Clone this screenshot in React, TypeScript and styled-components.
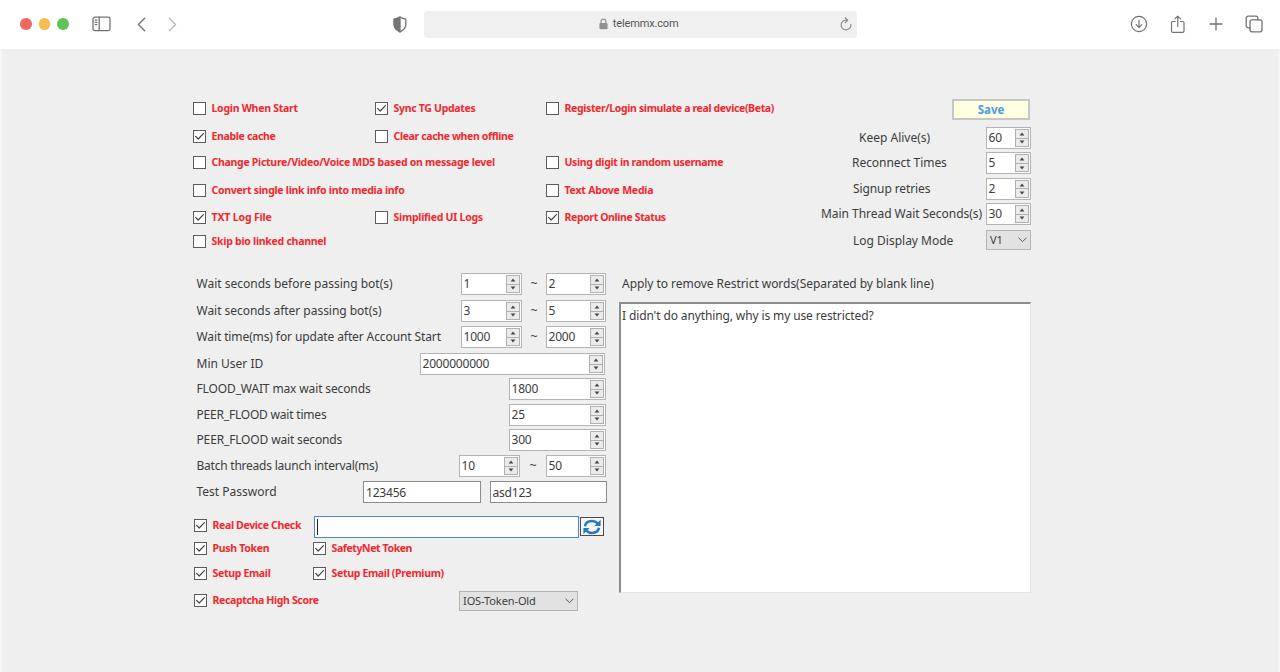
import React from "react";
import styled, { createGlobalStyle } from "styled-components";

const GlobalStyle = createGlobalStyle`
  *, *::before, *::after { box-sizing: border-box; }
  body { margin: 0; background: #efefef; overflow: hidden; }
`;

const ui = `"Noto Sans", "Open Sans", sans-serif`;

const Window = styled.div`
  width: 1280px;
  height: 672px;
  background: #efefef;
  border-left: 2px solid #f8f8f8;
  border-right: 2px solid #f6f6f6;
  font-family: ${ui};
  color: #3c3c3c;
`;

/* ---------- browser toolbar ---------- */

const Toolbar = styled.header`
  display: flex;
  align-items: center;
  height: 49px;
  margin: 0 -2px;
  padding-bottom: 1px;
  background: #fff;
`;

const Lights = styled.div`
  display: flex;
  gap: 7px;
  margin-left: 20px;
`;

const Light = styled.span<{ $color: string }>`
  width: 11.6px;
  height: 11.6px;
  border-radius: 50%;
  background: ${(p) => p.$color};
`;

const Glyph = styled.svg<{ $ml?: number; $color?: string; $w?: number }>`
  display: block;
  flex: none;
  margin-left: ${(p) => p.$ml ?? 0}px;
  fill: none;
  stroke: ${(p) => p.$color ?? "#747474"};
  stroke-width: ${(p) => p.$w ?? 1.3};
  stroke-linecap: round;
  stroke-linejoin: round;
`;

const Address = styled.div`
  display: flex;
  align-items: center;
  width: 433px;
  height: 27px;
  margin-left: 17px;
  padding: 0 5px 0 175px;
  border-radius: 4px;
  background: #f0f0f0;
`;

const Host = styled.span`
  flex: 1;
  margin-left: 5px;
  font: 11px/14px Roboto, sans-serif;
  letter-spacing: -0.14px;
  color: #555;
`;

/* ---------- shared form parts ---------- */

const Label = styled.span<{ $indent?: number; $track?: number }>`
  display: block;
  margin-left: ${(p) => p.$indent ?? 0}px;
  font-size: 12px;
  line-height: 21px;
  white-space: nowrap;
  letter-spacing: ${(p) => p.$track ?? 0}px;
`;

const CheckLabel = styled.label<{ $col?: number }>`
  display: flex;
  align-items: center;
  gap: 5.5px;
  height: 13px;
  grid-column: ${(p) => p.$col ?? "auto"};
`;

const Box = styled.span`
  display: flex;
  flex: none;
  width: 13px;
  height: 13px;
  border: 1px solid #5c5c5c;
  background: #fff;
`;

const CheckText = styled.span<{ $track?: number }>`
  font-size: 10.5px;
  font-weight: 700;
  line-height: 13px;
  white-space: nowrap;
  letter-spacing: ${(p) => p.$track ?? -0.3}px;
  color: #f2282e;
`;

const SpinFrame = styled.div<{ $w: number }>`
  display: flex;
  justify-content: space-between;
  width: ${(p) => p.$w}px;
  height: 22px;
  padding: 1px;
  border: 1px solid #b4b4b4;
  background: #fff;
`;

const Value = styled.span`
  padding-left: 0.5px;
  font-size: 12px;
  line-height: 17px;
  letter-spacing: -0.2px;
`;

const Arrows = styled.span`
  display: flex;
  flex-direction: column;
  width: 14px;
  height: 18px;
`;

const Arrow = styled.span`
  display: flex;
  flex: 1;
  align-items: center;
  justify-content: center;
  border: 1px solid #b0b0b0;
  background: #ebebeb;
  & + & { border-top-width: 0; }
`;

const Combo = styled.div<{ $w: number }>`
  display: flex;
  align-items: center;
  justify-content: space-between;
  width: ${(p) => p.$w}px;
  height: 20px;
  padding: 0 3px;
  border: 1px solid #b4b4b4;
  background: #e2e2e2;
  font-size: 11px;
  line-height: 18px;
  letter-spacing: -0.1px;
`;

const Save = styled.button`
  width: 78px;
  height: 21px;
  margin: 0 0 7px 131px;
  padding: 0;
  border: 2px solid #c6c6c4;
  background: #ffffe1;
  font: 700 11.5px/16px ${ui};
  color: #4a9ae6;
`;

/* ---------- page sections ---------- */

const Page = styled.main`
  display: flex;
  flex-direction: column;
  padding: 50px 0 0 191px;
`;

const Top = styled.section`
  display: flex;
  height: 174px;
`;

const Options = styled.div`
  display: grid;
  width: 628px;
  padding-top: 3px;
  grid-template-columns: 182px 171px auto;
  grid-template-rows: 27.6px 26.4px 27.6px 27.4px 23.6px 13px;
  align-items: start;
`;

const Limits = styled.div`
  display: flex;
  flex-direction: column;
  width: 210px;
`;

const LimitRow = styled.div<{ $h?: number }>`
  display: flex;
  justify-content: space-between;
  align-items: flex-start;
  height: ${(p) => p.$h ?? 25.4}px;
`;

const Bottom = styled.section`
  display: flex;
`;

const Settings = styled.div`
  width: 426px;
`;

const Row = styled.div<{ $h: number; $right?: number }>`
  display: flex;
  align-items: flex-start;
  height: ${(p) => p.$h}px;
  padding: 0 ${(p) => p.$right ?? 13}px 0 3.5px;
`;

const Fields = styled.div<{ $gap?: number }>`
  display: flex;
  gap: ${(p) => p.$gap ?? 0}px;
  margin-left: auto;
`;

const Tilde = styled.span<{ $w?: number }>`
  width: ${(p) => p.$w ?? 24}px;
  font-size: 12.5px;
  line-height: 22px;
  text-align: center;
`;

const Password = styled.div`
  width: 117.5px;
  height: 22px;
  padding-left: 2px;
  border: 1px solid #8a8a8a;
  background: #fff;
  font-size: 12px;
  line-height: 21px;
  letter-spacing: -0.2px;
`;

const DeviceRow = styled.div`
  display: flex;
  height: 26px;
  padding-left: 1px;
`;

const DeviceCheck = styled.div`
  width: 120px;
  padding-top: 3px;
`;

const DeviceInput = styled.div`
  width: 265px;
  height: 22px;
  padding: 2px;
  border: 1px solid #4a86d8;
  background: #fff;
`;

const Caret = styled.span`
  display: block;
  width: 1px;
  height: 16px;
  background: #222;
`;

const Refresh = styled.button`
  display: flex;
  align-items: center;
  justify-content: center;
  width: 24px;
  height: 19px;
  margin: 1px 0 0 1px;
  padding: 0;
  border: 1px solid #4a4a4a;
  background: #f4f6f8;
`;

const Tokens = styled.div`
  display: grid;
  padding-left: 1px;
  grid-template-columns: 119px 146px auto;
  grid-template-rows: 25px 24px 20px;
  align-items: start;
`;

const TokenCombo = styled.div`
  grid-column: 3;
`;

const TokenLast = styled.div`
  grid-column: 1;
  padding-top: 3px;
`;

const Words = styled.div`
  width: 412px;
`;

const TextArea = styled.div`
  height: 291px;
  margin-top: 8px;
  padding: 1px;
  border: solid;
  border-width: 2px 1px 1px 2px;
  border-color: #8c8c8c #e4e4e4 #e4e4e4 #8c8c8c;
  background: #fff;
`;

function Check({ text, on, col, track }: { text: string; on?: boolean; col?: number; track?: number }) {
  return (
    <CheckLabel $col={col}>
      <Box>
        {on && (
          <Glyph width="11" height="11" viewBox="0 0 11 11" $color="#444" $w={1.2}>
            <path d="M1.6 5.4 4.2 8 9.4 2.6" />
          </Glyph>
        )}
      </Box>
      <CheckText $track={track}>{text}</CheckText>
    </CheckLabel>
  );
}

function Spin({ value, w }: { value: string; w: number }) {
  return (
    <SpinFrame $w={w}>
      <Value>{value}</Value>
      <Arrows>
        <Arrow>
          <svg width="6" height="4" viewBox="0 0 6 4"><path d="M3 .4 5.4 3.4H.6Z" fill="#444" /></svg>
        </Arrow>
        <Arrow>
          <svg width="6" height="4" viewBox="0 0 6 4"><path d="M3 3.6.6.6h4.8Z" fill="#444" /></svg>
        </Arrow>
      </Arrows>
    </SpinFrame>
  );
}

function Chevron() {
  return (
    <Glyph width="9" height="6" viewBox="0 0 9 6" $color="#555" $w={1}>
      <path d="M.8 1 4.5 4.7 8.2 1" />
    </Glyph>
  );
}

function BrowserBar() {
  return (
    <Toolbar>
      <Lights>
        <Light $color="#ec6a5e" />
        <Light $color="#f4bd4f" />
        <Light $color="#5fc454" />
      </Lights>
      <Glyph $ml={23.5} width="19" height="16" viewBox="0 0 19 16">
        <rect x="1" y="1.2" width="17" height="13.4" rx="1.8" />
        <path d="M7.2 1.2v13.4M3.2 4.2h1.7M3.2 6.4h1.7M3.2 8.6h1.7" />
      </Glyph>
      <Glyph $ml={25.5} width="9" height="15" viewBox="0 0 9 15" $w={1.4}>
        <path d="M7.7 1.2 1.4 7.5l6.3 6.3" />
      </Glyph>
      <Glyph $ml={22} width="9" height="15" viewBox="0 0 9 15" $color="#bcbcbc" $w={1.4}>
        <path d="M1.3 1.2 7.6 7.5l-6.3 6.3" />
      </Glyph>
      <Glyph $ml={216} width="14" height="17" viewBox="0 0 14 17">
        <path d="M7 1c1.8 1.3 3.7 1.9 5.8 2.1v5.6c0 3.2-2.4 5.4-5.8 7.1-3.4-1.7-5.8-3.9-5.8-7.1V3.1C3.3 2.9 5.2 2.3 7 1Z" />
        <path d="M7 1v14.8c-3.4-1.7-5.8-3.9-5.8-7.1V3.1C3.3 2.9 5.2 2.3 7 1Z" fill="#747474" />
      </Glyph>
      <Address>
        <Glyph width="9" height="12" viewBox="0 0 9 12" $color="#929292" $w={1.2}>
          <path d="M2.1 5.5V3.5a2.4 2.4 0 0 1 4.8 0v2" />
          <rect x="1" y="5.5" width="7" height="5.2" rx=".6" fill="#929292" />
        </Glyph>
        <Host>telemmx.com</Host>
        <Glyph width="12" height="14" viewBox="0 0 12 14" $color="#8c8c8c" $w={1.2}>
          <path d="M10.9 7.6A4.9 4.9 0 1 1 6 3.1h1.3M5.3.8l2.4 2.3-2.3 2.4" />
        </Glyph>
      </Address>
      <Glyph $ml={273} width="18" height="18" viewBox="0 0 18 18" $w={1.2}>
        <circle cx="9" cy="9" r="7.6" />
        <path d="M9 5v7.4M6.2 9.7 9 12.5l2.8-2.8" />
      </Glyph>
      <Glyph $ml={22} width="16" height="19" viewBox="0 0 16 19" $w={1.2}>
        <path d="M5.2 6.5H2.8a1.3 1.3 0 0 0-1.3 1.3v8.2a1.3 1.3 0 0 0 1.3 1.3h9.9a1.3 1.3 0 0 0 1.3-1.3V7.8a1.3 1.3 0 0 0-1.3-1.3h-2.4M7.75 11.5V1.2M4.9 3.9l2.85-2.85L10.6 3.9" />
      </Glyph>
      <Glyph $ml={23} width="14" height="14" viewBox="0 0 14 14">
        <path d="M7 1v12M1 7h12" />
      </Glyph>
      <Glyph $ml={22} width="18" height="18" viewBox="0 0 18 18">
        <rect x="5" y="4.8" width="12" height="12" rx="2" />
        <path d="M5 12.8H3.2a2 2 0 0 1-2-2V3.2a2 2 0 0 1 2-2h7.6a2 2 0 0 1 2 2v1.6" />
      </Glyph>
    </Toolbar>
  );
}

export default function App() {
  return (
    <Window>
      <GlobalStyle />
      <BrowserBar />
      <Page>
        <Top>
          <Options>
            <Check col={1} text="Login When Start" track={-0.26} />
            <Check col={2} text="Sync TG Updates" on />
            <Check col={3} text="Register/Login simulate a real device(Beta)" track={-0.36} />
            <Check col={1} text="Enable cache" on track={-0.34} />
            <Check col={2} text="Clear cache when offline" track={-0.36} />
            <Check col={1} text="Change Picture/Video/Voice MD5 based on message level" track={-0.28} />
            <Check col={3} text="Using digit in random username" track={-0.33} />
            <Check col={1} text="Convert single link info into media info" track={-0.27} />
            <Check col={3} text="Text Above Media" track={-0.21} />
            <Check col={1} text="TXT Log File" on track={-0.15} />
            <Check col={2} text="Simplified UI Logs" track={-0.26} />
            <Check col={3} text="Report Online Status" on track={-0.38} />
            <Check col={1} text="Skip bio linked channel" track={-0.26} />
          </Options>
          <Limits>
            <Save>Save</Save>
            <LimitRow>
              <Label $indent={38}>Keep Alive(s)</Label>
              <Spin value="60" w={45} />
            </LimitRow>
            <LimitRow>
              <Label $indent={31} $track={-0.05}>Reconnect Times</Label>
              <Spin value="5" w={45} />
            </LimitRow>
            <LimitRow>
              <Label $indent={32} $track={-0.1}>Signup retries</Label>
              <Spin value="2" w={45} />
            </LimitRow>
            <LimitRow $h={26.4}>
              <Label $track={-0.04}>Main Thread Wait Seconds(s)</Label>
              <Spin value="30" w={45} />
            </LimitRow>
            <LimitRow>
              <Label $indent={32}>Log Display Mode</Label>
              <Combo $w={45}>V1<Chevron /></Combo>
            </LimitRow>
          </Limits>
        </Top>
        <Bottom>
          <Settings>
            <Row $h={27}>
              <Label>Wait seconds before passing bot(s)</Label>
              <Fields><Spin value="1" w={61} /><Tilde>~</Tilde><Spin value="2" w={60} /></Fields>
            </Row>
            <Row $h={26}>
              <Label $track={-0.03}>Wait seconds after passing bot(s)</Label>
              <Fields><Spin value="3" w={61} /><Tilde>~</Tilde><Spin value="5" w={60} /></Fields>
            </Row>
            <Row $h={27}>
              <Label $track={-0.11}>Wait time(ms) for update after Account Start</Label>
              <Fields><Spin value="1000" w={61} /><Tilde>~</Tilde><Spin value="2000" w={60} /></Fields>
            </Row>
            <Row $h={25} $right={14}>
              <Label>Min User ID</Label>
              <Fields><Spin value="2000000000" w={185} /></Fields>
            </Row>
            <Row $h={26}>
              <Label $track={-0.13}>FLOOD_WAIT max wait seconds</Label>
              <Fields><Spin value="1800" w={97} /></Fields>
            </Row>
            <Row $h={25}>
              <Label $track={-0.2}>PEER_FLOOD wait times</Label>
              <Fields><Spin value="25" w={97} /></Fields>
            </Row>
            <Row $h={26}>
              <Label $track={-0.15}>PEER_FLOOD wait seconds</Label>
              <Fields><Spin value="300" w={97} /></Fields>
            </Row>
            <Row $h={26}>
              <Label $track={-0.23}>Batch threads launch interval(ms)</Label>
              <Fields><Spin value="10" w={61} /><Tilde $w={26}>~</Tilde><Spin value="50" w={60} /></Fields>
            </Row>
            <Row $h={35} $right={12}>
              <Label>Test Password</Label>
              <Fields $gap={9}><Password>123456</Password><Password>asd123</Password></Fields>
            </Row>
            <DeviceRow>
              <DeviceCheck><Check text="Real Device Check" on track={-0.34} /></DeviceCheck>
              <DeviceInput><Caret /></DeviceInput>
              <Refresh aria-label="Refresh">
                <svg width="20" height="16" viewBox="0 0 20 16" fill="none" stroke="#2878b8" strokeWidth="2.6">
                  <path d="M3 7.2C3.6 3.9 6.5 2 10 2c2.3 0 4.2.8 5.6 2.3M17 8.8c-.6 3.3-3.5 5.2-7 5.2-2.3 0-4.2-.8-5.6-2.3" />
                  <path d="M18.6.8v6.2h-6.2ZM1.4 15.2V9h6.2Z" fill="#2878b8" stroke="none" />
                </svg>
              </Refresh>
            </DeviceRow>
            <Tokens>
              <Check col={1} text="Push Token" on />
              <Check col={2} text="SafetyNet Token" on track={-0.4} />
              <Check col={1} text="Setup Email" on track={-0.32} />
              <Check col={2} text="Setup Email (Premium)" on track={-0.32} />
              <TokenLast><Check text="Recaptcha High Score" on track={-0.35} /></TokenLast>
              <TokenCombo><Combo $w={119}>IOS-Token-Old<Chevron /></Combo></TokenCombo>
            </Tokens>
          </Settings>
          <Words>
            <Label $indent={3} $track={-0.04}>Apply to remove Restrict words(Separated by blank line)</Label>
            <TextArea>
              <Label $track={-0.12}>I didn't do anything, why is my use restricted?</Label>
            </TextArea>
          </Words>
        </Bottom>
      </Page>
    </Window>
  );
}
